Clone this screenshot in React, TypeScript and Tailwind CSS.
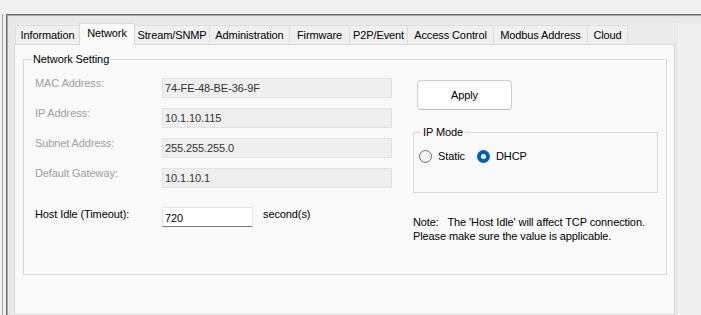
import React from "react";

const tabs = [
  { name: "Information", w: "w-[64px]" },
  { name: "Network", w: "w-[56px]", active: true },
  { name: "Stream/SNMP", w: "w-[75px]" },
  { name: "Administration", w: "w-[80px]" },
  { name: "Firmware", w: "w-[60px]" },
  { name: "P2P/Event", w: "w-[58px]" },
  { name: "Access Control", w: "w-[86px]" },
  { name: "Modbus Address", w: "w-[94px]" },
  { name: "Cloud", w: "w-[41px]" },
];

const fields = [
  { label: "MAC Address:", value: "74-FE-48-BE-36-9F" },
  { label: "IP Address:", value: "10.1.10.115" },
  { label: "Subnet Address:", value: "255.255.255.0" },
  { label: "Default Gateway:", value: "10.1.10.1" },
];

function Radio({ checked }: { checked?: boolean }) {
  if (checked) {
    return (
      <span className="flex h-[13px] w-[13px] items-center justify-center rounded-full bg-[#005fb8]">
        <span className="h-[5px] w-[5px] rounded-full bg-white" />
      </span>
    );
  }
  return <span className="h-[13px] w-[13px] rounded-full border border-[#6b6b6b] bg-[#f4f4f4]" />;
}

export default function App() {
  return (
    <div className="flex h-[315px] w-[701px] overflow-hidden bg-[#f0f0f0] font-['Liberation_Sans',Arial,sans-serif] text-[11px] tracking-[-0.1px] text-black">
      {/* outer window edge */}
      <div className="mt-[14px] ml-[2px] w-px bg-[#a3a3a3]" />
      <div className="ml-[3px] mt-[14px] flex flex-1 border-t border-l border-[#6b6b6b] bg-[#e8e8e8] pt-[8px] pl-[7px] shadow-[inset_1px_1px_0_#a8a8a8]">
        <div className="flex w-[663px] flex-col">
          {/* tab strip */}
          <div className="flex h-[21px] items-end bg-[#ebebeb] pl-px">
            {tabs.map((t) =>
              t.active ? (
                <div
                  key={t.name}
                  className={`${t.w} relative z-10 -mb-px -mr-px flex h-[22px] items-start justify-center border-x border-t border-[#d9d9d9] bg-[#f9f9f9] pt-[3px] leading-[13px]`}
                >
                  {t.name}
                </div>
              ) : (
                <div
                  key={t.name}
                  className={`${t.w} flex h-[19px] items-center justify-center border-t border-l border-[#dedede] bg-[#f0f0f0] leading-[13px] last:border-r`}
                >
                  {t.name}
                </div>
              )
            )}
          </div>

          {/* tab page */}
          <div className="flex-1 w-[661px] border border-[#d9d9d9] bg-[#f9f9f9]">
            <fieldset className="ml-[8px] mt-[8px] h-[222px] w-[644px] border border-[#d8d8d8]">
              <legend className="ml-[7px] px-[2px] leading-[13px]">Network Setting</legend>
              <div className="flex pt-[12px]">
                {/* left column */}
                <div className="flex w-[389px] flex-col pl-[11px]">
                  {fields.map((f) => (
                    <div key={f.label} className="mb-[10px] flex items-start">
                      <span className="-mt-px w-[127px] leading-[13px] text-[#a0a0a0]">{f.label}</span>
                      <div className="flex h-[20px] w-[230px] items-center border border-[#e2e2e2] bg-[#efefef] pl-[2px] text-[#333333]">
                        {f.value}
                      </div>
                    </div>
                  ))}
                  <div className="mt-[10px] flex items-start">
                    <span className="w-[127px] leading-[13px]">Host Idle (Timeout):</span>
                    <div className="-mt-px flex h-[20px] w-[91px] items-center border border-[#e4e4e4] border-b-[#7a7a7a] bg-white pl-[2px] pt-[2px]">
                      720
                    </div>
                    <span className="ml-[10px] leading-[13px]">second(s)</span>
                  </div>
                </div>

                {/* right column */}
                <div className="flex flex-col">
                  <button className="ml-[4px] mt-[2px] h-[30px] w-[95px] rounded-[4px] border border-[#d0d0d0] border-b-[#bcbcbc] bg-[#fdfdfd] text-[11px]">
                    Apply
                  </button>
                  <fieldset className="mt-[16px] h-[67px] w-[245px] border border-[#d8d8d8]">
                    <legend className="ml-[7px] px-[2px] leading-[13px]">IP Mode</legend>
                    <div className="flex items-center pl-[5px] pt-[11px]">
                      <div className="flex w-[58px] items-center gap-[6px]">
                        <Radio />
                        <span className="leading-[13px]">Static</span>
                      </div>
                      <div className="flex items-center gap-[6px]">
                        <Radio checked />
                        <span className="leading-[13px]">DHCP</span>
                      </div>
                    </div>
                  </fieldset>
                  <div className="mt-[22px] leading-[14px]">
                    <div className="whitespace-pre">Note:   The 'Host Idle' will affect TCP connection.</div>
                    <div>Please make sure the value is applicable.</div>
                  </div>
                </div>
              </div>
            </fieldset>
          </div>
        </div>
        <div className="ml-px w-px bg-[#f6f6f6]" />
        <div className="flex-1 bg-[#eeeeee]" />
      </div>
    </div>
  );
}
